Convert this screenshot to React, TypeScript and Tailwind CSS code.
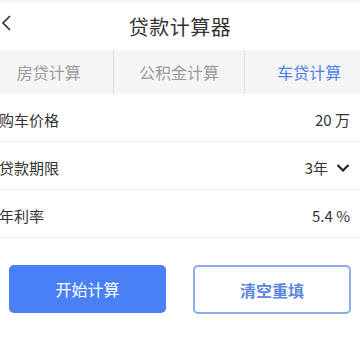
import * as React from 'react';

const font = { fontFamily: '"Noto Sans CJK SC", "Noto Sans", sans-serif' };

const tabs = ['房贷计算', '公积金计算', '车贷计算'];

const rows = [
  { label: '购车价格', value: '20 万' },
  { label: '贷款期限', value: '3年', select: true },
  { label: '年利率', value: '5.4 %' },
];

export default function App() {
  const [active, setActive] = React.useState(2);

  return (
    <div className="w-[360px] h-[360px] overflow-hidden bg-white" style={font}>
      <div className="h-[2px] bg-[#f4f4f4]" />

      {/* Header */}
      <div className="relative h-[48px] flex items-center justify-center">
        <svg className="absolute left-[1px] top-[13px]" width="10" height="16" viewBox="0 0 10 16" fill="none">
          <path d="M9 1L2 8L9 15" stroke="#333" strokeWidth="1.7" />
        </svg>
        <span className="text-[20px] text-[#333] tracking-[0.5px] mt-[1px]">贷款计算器</span>
      </div>

      {/* Tabs */}
      <div className="w-[390px] -ml-[16px] h-[44px] flex bg-[#f5f5f5]">
        {tabs.map((t, i) => (
          <button
            key={t}
            onClick={() => setActive(i)}
            className={`flex-1 flex items-center justify-center text-[16px] ${
              i > 0 ? 'border-l border-[#dcdcdc]' : ''
            } ${active === i ? 'text-[#4a80e8]' : 'text-[#9a9a9a]'}`}
          >
            {t}
          </button>
        ))}
      </div>

      {/* Form rows */}
      <div className="flex flex-col">
        {rows.map((r) => (
          <div key={r.label} className="h-[48px] pt-[5px] flex items-center justify-between pr-[10px] border-b border-[#f0f0f0]">
            <span className="text-[15px] text-[#333] -ml-[1px]">{r.label}</span>
            {r.select ? (
              <span className="flex items-center gap-[8px] text-[15px] text-[#333]">
                3年
                <svg width="14" height="10" viewBox="0 0 14 10" fill="none">
                  <path d="M1.5 2L7 7.5L12.5 2" stroke="#222" strokeWidth="2.2" />
                </svg>
              </span>
            ) : (
              <span className="text-[15px] text-[#333]">{r.value}</span>
            )}
          </div>
        ))}
      </div>

      {/* Buttons */}
      <div className="flex justify-between pl-[9px] pr-[9px] mt-[27px]">
        <button className="w-[157px] h-[48px] rounded-[5px] bg-[#4a80f5] text-white text-[16px]">
          开始计算
        </button>
        <button className="w-[158px] h-[49px] rounded-[5px] border-2 border-[#8aacec] text-[#5b88dc] text-[16px] font-bold">
          清空重填
        </button>
      </div>
    </div>
  );
}
